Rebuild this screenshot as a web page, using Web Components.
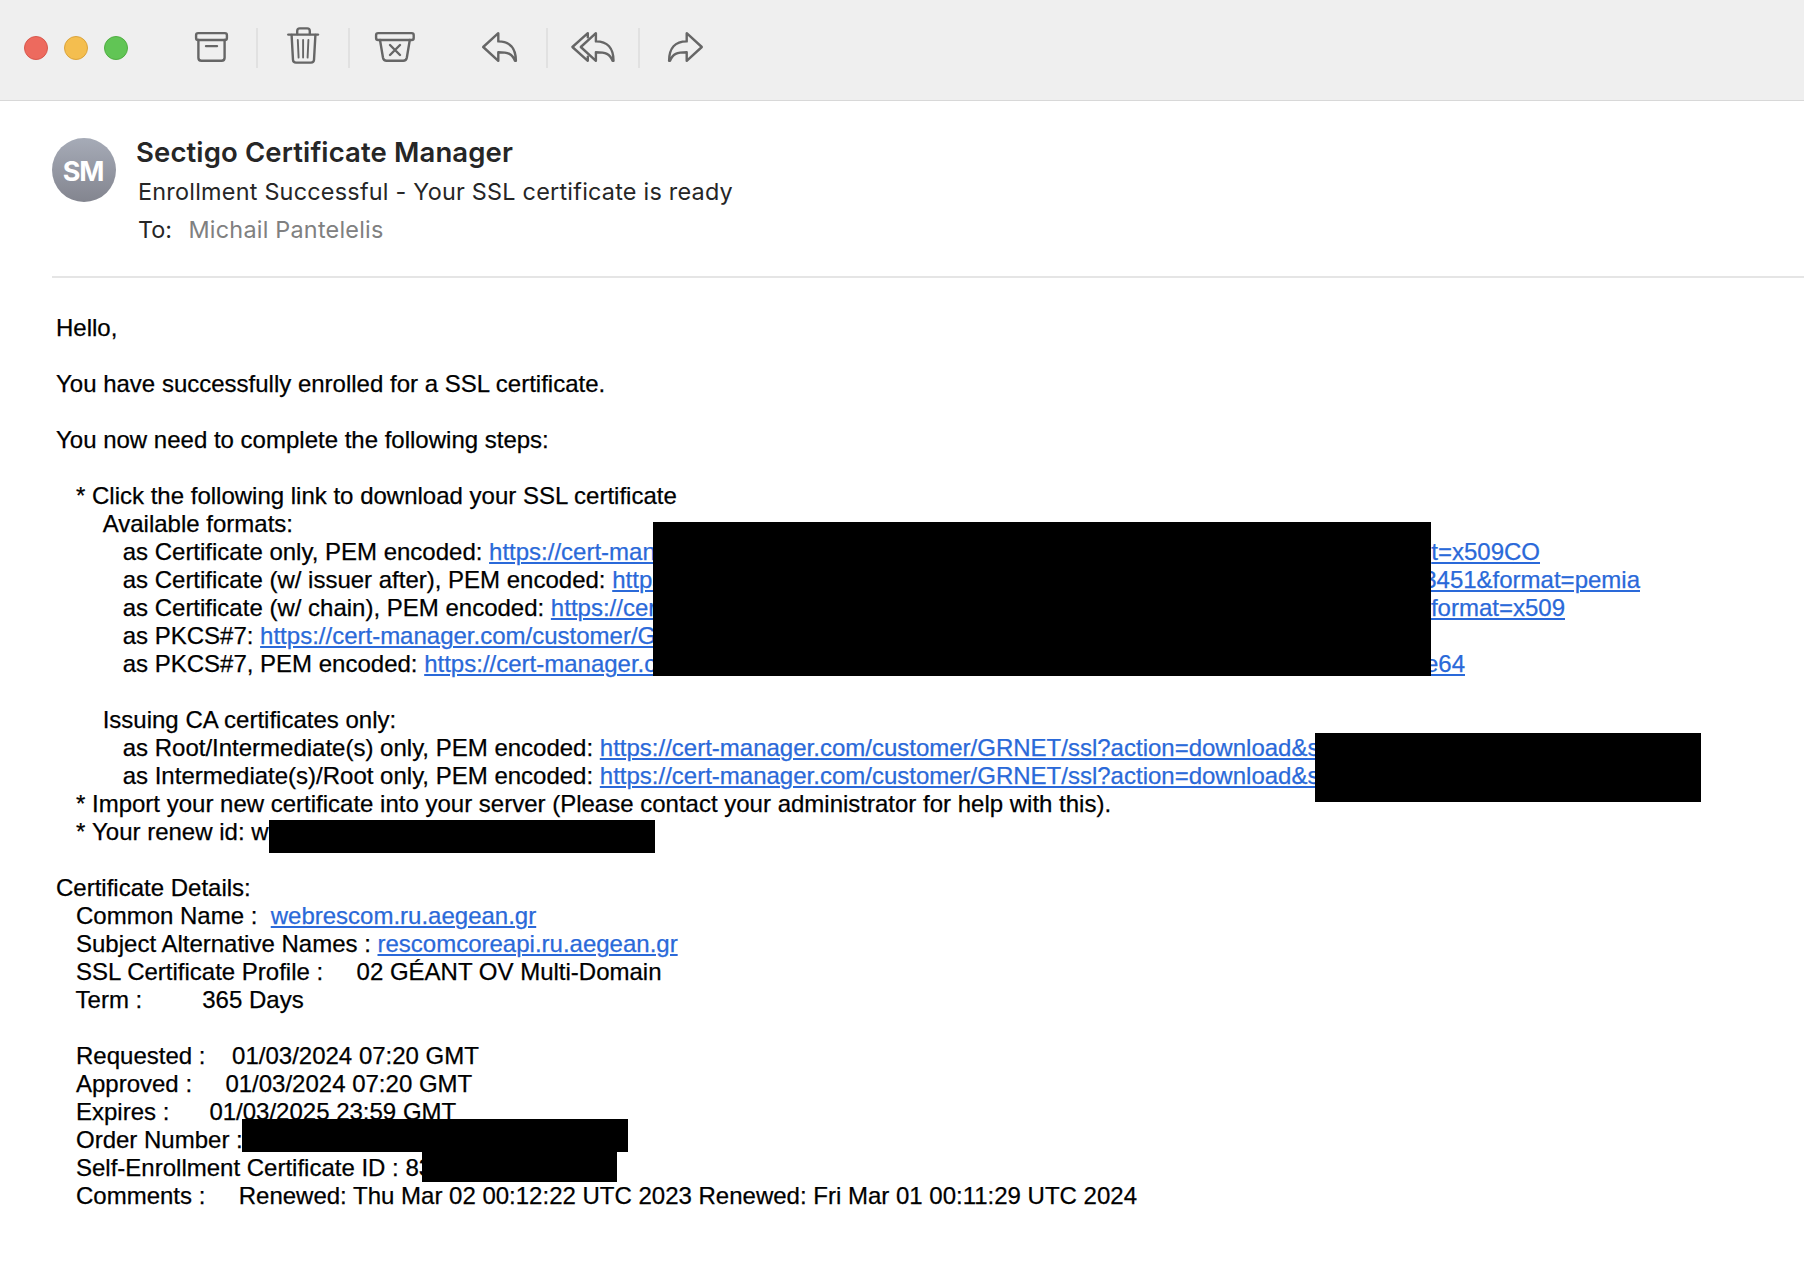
<!DOCTYPE html>
<html lang="en">
<head>
<meta charset="utf-8">
<title>Enrollment Successful - Your SSL certificate is ready</title>
<style>
html,body{margin:0;padding:0;background:#fff;width:1804px;height:1282px;overflow:hidden}
</style>
</head>
<body>
<mail-window></mail-window>
<script>
const define = (name, html, ready) => customElements.define(name, class extends HTMLElement {
  connectedCallback() {
    if (this.shadowRoot) return;
    const root = this.attachShadow({ mode: 'open' });
    root.innerHTML = html;
    if (ready) ready(this, root);
  }
});

/* Single line of text whose tracking is adjusted to span a given width. */
define('fit-text', `<style>:host{display:block;white-space:pre}span{display:inline-block}</style><span><slot></slot></span>`,
  (host, root) => {
    const span = root.querySelector('span');
    const target = +host.getAttribute('width');
    const n = host.textContent.length;
    const w = span.getBoundingClientRect().width;
    span.style.letterSpacing = ((target - w) / n).toFixed(4) + 'px';
  });

const REPLY = 'M27.2 47L42.3 33.2V41.4C53.8 41.4 59.9 48 59.9 60.8H59C56.4 53.6 52 52.2 42.3 52.2V60.8Z';
const ICONS = {
  archive: '<rect x="30.1" y="33.1" width="30.8" height="6.9" rx="2"/><path d="M32.4 40V57.8Q32.4 60.8 35.4 60.8H55.6Q58.6 60.8 58.6 57.8V40"/><path d="M40 46.1H51"/>',
  trash: '<path d="M30.3 34.6H60"/><path d="M39.2 34V31Q39.2 28.4 41.8 28.4H49.2Q51.8 28.4 51.8 31V34"/><path d="M33.6 35L35 60Q35.2 62.6 38 62.6H53Q55.8 62.6 56 60L57.4 35"/><path d="M39.8 40L40.6 57.6M45.1 40V57.6M50.4 40L49.6 57.6" stroke-width="1.9"/>',
  junk: '<rect x="26.1" y="33.1" width="37.6" height="6.9" rx="2"/><path d="M30 40L33 57.8Q33.6 60.8 36.6 60.8H53.2Q56.2 60.8 56.8 57.8L59.8 40"/><path d="M40 45L50 55M50 45L40 55"/>',
  reply: `<path d="${REPLY}"/>`,
  'reply-all': `<g transform="translate(5.6 0)"><path d="${REPLY}"/></g><path d="M39.8 37.2V33.2L24.4 47L39.8 60.8V56.8"/>`,
  forward: `<g transform="matrix(-1 0 0 1 89 0)"><path d="${REPLY}"/></g>`
};
define('tool-button', `<style>:host{display:block;width:90px;height:100px}
svg{display:block;fill:none;stroke:#666;stroke-width:2.4;stroke-linecap:round;stroke-linejoin:round}</style>
<svg width="90" height="100" viewBox="0 0 90 100"></svg>`,
  (host, root) => { root.querySelector('svg').innerHTML = ICONS[host.getAttribute('icon')]; });

define('tool-group', `<style>:host{display:flex;align-items:center}
::slotted(hr){width:2px;height:40px;margin:0 0 4px;border:0;background:#e1e1e1}</style><slot></slot>`);

define('traffic-lights', `<style>:host{display:flex;gap:16px;margin-bottom:4px}
i{width:24px;height:24px;border-radius:50%;box-sizing:border-box;border:1px solid}
.r{background:#ed6a5e;border-color:#d8584d}.y{background:#f4be4f;border-color:#dba43c}.g{background:#61c555;border-color:#50ae42}</style>
<i class="r"></i><i class="y"></i><i class="g"></i>`);

define('mail-toolbar', `<style>:host{display:flex;align-items:center;height:100px;padding-left:24px;background:#efefef;border-bottom:1px solid #d8d8d8}
.a{margin-left:38px}.b{margin-left:16px}</style>
<traffic-lights></traffic-lights>
<tool-group class="a"><tool-button icon="archive"></tool-button><hr><tool-button icon="trash"></tool-button><hr><tool-button icon="junk"></tool-button></tool-group>
<tool-group class="b"><tool-button icon="reply"></tool-button><hr><tool-button icon="reply-all"></tool-button><hr><tool-button icon="forward"></tool-button></tool-group>`);

define('user-avatar', `<style>:host{display:flex;align-items:center;justify-content:center;width:64px;height:64px;border-radius:50%;
background:linear-gradient(#a6abb7,#83858f);color:#fff;font:700 27px/64px Inter,sans-serif;letter-spacing:-1.2px}span{padding:3px 2px 0 0}</style><span><slot></slot></span>`);

define('mail-header', `<style>:host{display:flex;margin-left:52px;height:175px;border-bottom:2px solid #e5e5e5;font-family:Inter,sans-serif;color:#262626}
user-avatar{margin-top:37px}
.t{margin-left:20px;padding-top:32px}
.from{font-size:27.5px;font-weight:600;line-height:38px;margin-bottom:2px}
.row{display:flex;font-size:23.4px;line-height:38px;padding-left:2px}
.to{gap:16.5px}.to :last-child{color:#808080}</style>
<user-avatar>SM</user-avatar>
<div class="t"><fit-text class="from" width="377">Sectigo Certificate Manager</fit-text>
<div class="row"><fit-text width="595">Enrollment Successful - Your SSL certificate is ready</fit-text></div>
<div class="row to"><fit-text width="34">To:</fit-text><fit-text width="195">Michail Pantelelis</fit-text></div></div>`);

define('text-line', `<style>:host{display:flex;height:28px;white-space:pre}</style><slot></slot>`);

define('mail-link', `<style>:host{display:block;color:#2a69d9;text-decoration:underline;text-decoration-thickness:2px;text-underline-offset:2px}
:host([split]){display:flex;flex:1;justify-content:space-between;text-decoration:none}
:host([split]) ::slotted(span){text-decoration:underline;text-decoration-thickness:2px;text-underline-offset:2px}</style><slot></slot>`);

define('redaction-box', `<style>:host{position:absolute;background:#000}</style>`,
  host => { const [x, y, w, h] = host.getAttribute('box').split(' ');
    Object.assign(host.style, { left: x + 'px', top: y + 'px', width: w + 'px', height: h + 'px' }); });

define('mail-body', `<style>:host{display:block;padding:36px 0 0 56px;font:24px/28px "Liberation Sans",Arial,sans-serif;color:#000;-webkit-text-stroke:.25px}
.k{padding-left:1.3px}</style>
<text-line>Hello,</text-line>
<text-line></text-line>
<text-line>You have successfully enrolled for a SSL certificate.</text-line>
<text-line></text-line>
<text-line>You now need to complete the following steps:</text-line>
<text-line></text-line>
<text-line>   * Click the following link to download your SSL certificate</text-line>
<text-line class="k">       Available formats:</text-line>
<text-line style="width:1484px"><span>          as Certificate only, PEM encoded: </span><mail-link split><span>https://cert-man</span><span>t=x509CO</span></mail-link></text-line>
<text-line style="width:1584px"><span>          as Certificate (w/ issuer after), PEM encoded: </span><mail-link split><span>https</span><span>3451&amp;format=pemia</span></mail-link></text-line>
<text-line style="width:1509px"><span>          as Certificate (w/ chain), PEM encoded: </span><mail-link split><span>https://cer</span><span>format=x509</span></mail-link></text-line>
<text-line><span>          as PKCS#7: </span><mail-link>https://cert-manager.com/customer/G</mail-link></text-line>
<text-line style="width:1409px"><span>          as PKCS#7, PEM encoded: </span><mail-link split><span>https://cert-manager.c</span><span>e64</span></mail-link></text-line>
<text-line></text-line>
<text-line>       Issuing CA certificates only:</text-line>
<text-line><span>          as Root/Intermediate(s) only, PEM encoded: </span><mail-link>https://cert-manager.com/customer/GRNET/ssl?action=download&amp;s</mail-link></text-line>
<text-line><span>          as Intermediate(s)/Root only, PEM encoded: </span><mail-link>https://cert-manager.com/customer/GRNET/ssl?action=download&amp;s</mail-link></text-line>
<text-line>   * Import your new certificate into your server (Please contact your administrator for help with this).</text-line>
<text-line>   * <span>Your renew id: w</span></text-line>
<text-line></text-line>
<text-line>Certificate Details:</text-line>
<text-line><span>   Common Name :  </span><mail-link>webrescom.ru.aegean.gr</mail-link></text-line>
<text-line><span>   Subject <span>Alternative Names : </span></span><mail-link>rescomcoreapi.ru.aegean.gr</mail-link></text-line>
<text-line>   SSL Certificate Profile :     02 GÉANT OV Multi-Domain</text-line>
<text-line>   Term :         365 Days</text-line>
<text-line></text-line>
<text-line>   Requested :    01/03/2024 07:20 GMT</text-line>
<text-line class="k">   Approved :     01/03/2024 07:20 GMT</text-line>
<text-line>   Expires :      01/03/2025 23:59 GMT</text-line>
<text-line>   Order Number :</text-line>
<text-line>   Self-Enrollment Certificate ID : 83</text-line>
<text-line>   Comments :     Renewed: Thu Mar 02 00:12:22 UTC 2023 Renewed: Fri Mar 01 00:11:29 UTC 2024</text-line>
<redaction-box box="653 522 778 154"></redaction-box>
<redaction-box box="1315 733 386 69"></redaction-box>
<redaction-box box="269 820 386 33"></redaction-box>
<redaction-box box="242 1119 386 33"></redaction-box>
<redaction-box box="422 1150 195 32"></redaction-box>`);

define('mail-window', `<style>:host{display:block;position:relative;width:1804px;height:1282px;background:#fff;overflow:hidden}</style>
<mail-toolbar></mail-toolbar><mail-header></mail-header><mail-body></mail-body>`);
</script>
</body>
</html>
